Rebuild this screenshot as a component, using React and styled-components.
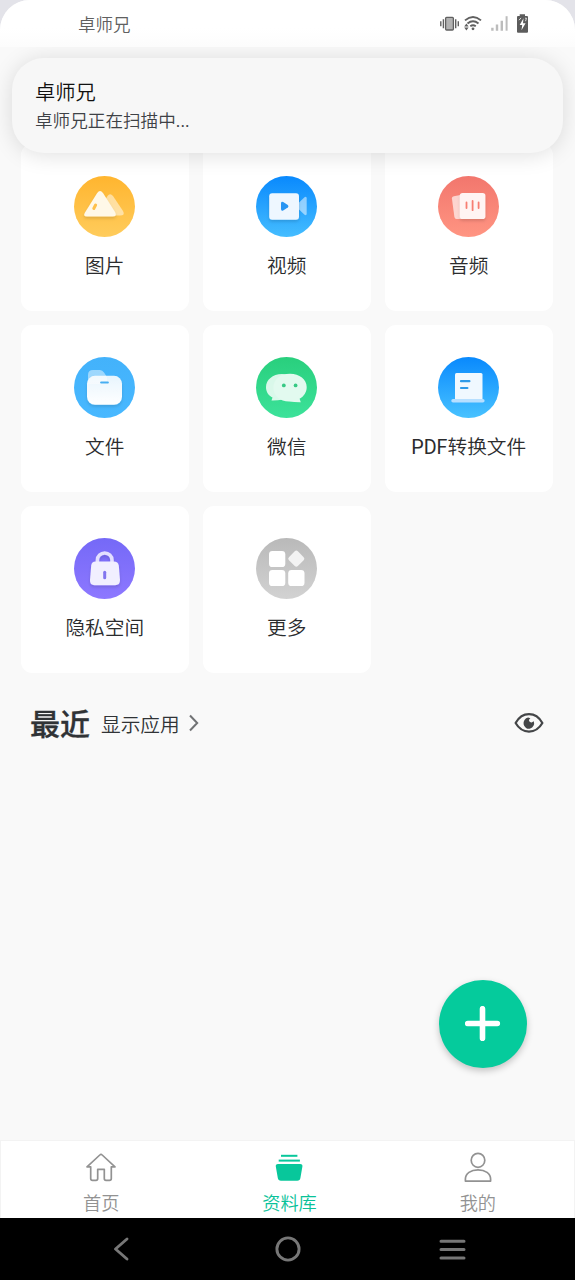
import React from 'react';
import styled, { createGlobalStyle } from 'styled-components';

const GlobalStyle = createGlobalStyle`
  * { box-sizing: border-box; }
  body {
    margin: 0;
    background: #e3e3e9;
    font-family: Roboto, "Noto Sans CJK SC", sans-serif;
    font-weight: 350;
  }
  svg { display: block; }
`;

const Screen = styled.div`
  position: relative;
  display: flex;
  flex-direction: column;
  width: 575px;
  height: 1280px;
  overflow: hidden;
  border-radius: 30px 30px 0 0;
  background: #f9f9f9;
`;

const StatusBar = styled.header`
  position: relative;
  z-index: 3;
  display: flex;
  flex: none;
  align-items: center;
  justify-content: space-between;
  height: 47px;
  padding: 0 46px 0 78px;
  background: linear-gradient(#fff 60%, #fcfcfc);
  color: #606060;
  font-size: 17.5px;
`;

const StatusIcons = styled.div`
  display: flex;
  align-items: center;
`;

const Notification = styled.section`
  position: absolute;
  z-index: 2;
  top: 58px;
  left: 12px;
  display: flex;
  flex-direction: column;
  width: 551px;
  height: 95px;
  padding: 21px 23px;
  border-radius: 32px;
  background: #f7f7f7;
  box-shadow: 0 2px 22px rgba(0, 0, 0, 0.13);
`;

const NoticeTitle = styled.div`
  color: #111;
  font-size: 20.3px;
  line-height: 28px;
`;

const NoticeText = styled.div`
  color: #3e4146;
  font-size: 17.6px;
  line-height: 28px;
`;

const Latin = styled.span`
  font-weight: 400;
`;

const Content = styled.main`
  flex: 1;
  padding: 97px 22.5px 0 21px;
`;

const Grid = styled.div`
  display: grid;
  grid-template-columns: repeat(3, 1fr);
  grid-auto-rows: 167px;
  gap: 14px 14.5px;
`;

const Card = styled.div`
  display: flex;
  flex-direction: column;
  align-items: center;
  padding-top: 32px;
  border-radius: 11px;
  background: #fff;
`;

const CardLabel = styled.div`
  margin-top: 15px;
  color: #2b2c2e;
  font-size: 19.7px;
  line-height: 29px;
  white-space: nowrap;
`;

const Recent = styled.div`
  display: flex;
  align-items: center;
  height: 60px;
  margin-top: 20px;
  padding: 0 9px;
  color: #303336;
`;

const RecentTitle = styled.h2`
  margin: 0 11px 0 0;
  padding-top: 3px;
  font-size: 30px;
  font-weight: 500;
  line-height: 60px;
  -webkit-text-stroke: 0.3px currentColor;
`;

const RecentFilter = styled.div`
  display: flex;
  flex: 1;
  align-items: center;
  gap: 9px;
  font-size: 19.7px;
`;

const AddButton = styled.button`
  position: absolute;
  top: 979.5px;
  left: 438.5px;
  display: flex;
  align-items: center;
  justify-content: center;
  width: 88px;
  height: 88px;
  padding: 0;
  border: 0;
  border-radius: 50%;
  background: #05cb9c;
  box-shadow: 0 3px 7px rgba(0, 0, 0, 0.22);
`;

const TabBar = styled.nav`
  display: grid;
  flex: none;
  grid-template-columns: repeat(3, 1fr);
  height: 78px;
  padding: 10px 2px 0 6px;
  border: 1px solid #f3f3f3;
  border-bottom: 0;
  background: #fff;
`;

const Tab = styled.div`
  display: flex;
  flex-direction: column;
  align-items: center;
  color: ${(p) => (p.$active ? '#09c299' : '#929292')};
  font-size: 18.2px;
  line-height: 26px;
  gap: 8px;
`;

const SystemBar = styled.footer`
  display: flex;
  flex: none;
  align-items: center;
  justify-content: space-between;
  height: 62px;
  padding: 0 109px 0 113px;
  background: #000;
`;

const discs = {
  image: ['#ffb52f', '#ffcc5c'],
  video: ['#0989fd', '#45bdff'],
  audio: ['#f2766d', '#ff9582'],
  file: ['#43b2fb', '#48b8ff'],
  wechat: ['#29cf7d', '#3ce29a'],
  pdf: ['#0989fd', '#48c2ff'],
  lock: ['#7569f7', '#8d78ff'],
  more: ['#b9b9b9', '#d2d2d2'],
};

function Disc({ name, children }) {
  const [from, to] = discs[name];
  return (
    <svg width="61" height="61" viewBox="0 0 61 61">
      <defs>
        <linearGradient id={`disc-${name}`} x1="0" y1="0" x2="0" y2="1">
          <stop stopColor={from} />
          <stop offset="1" stopColor={to} />
        </linearGradient>
        <linearGradient id={`face-${name}`} x1="0" y1="0" x2="0" y2="1">
          <stop stopColor="#fff" stopOpacity=".87" />
          <stop offset="1" stopColor="#fff" />
        </linearGradient>
        <filter id={`lift-${name}`} x="-30%" y="-30%" width="160%" height="170%">
          <feDropShadow dx="0" dy="2" stdDeviation="1.5" floodColor="#000" floodOpacity=".13" />
        </filter>
      </defs>
      <circle cx="30.5" cy="30.5" r="30.5" fill={`url(#disc-${name})`} />
      {children}
    </svg>
  );
}

const ImageIcon = () => (
  <Disc name="image">
    <path d="M30 26 L33.5 20 Q36 16.5 39 20 L49 35 Q51.5 39.5 46 39.5 H34Z" fill="#fff" opacity=".5" />
    <path d="M11 36.5 L23.2 17 Q26 13.2 29 17 L41 36 Q43.5 40.5 38.5 40.5 H13 Q8.5 40.3 11 36.5Z" fill="#fff8e8" filter="url(#lift-image)" />
    <path d="M21.6 29 L19.8 32.5" stroke="#ffc04b" strokeWidth="3" strokeLinecap="round" />
  </Disc>
);

const VideoIcon = () => (
  <Disc name="video">
    <path d="M42 27.5 L48.5 21.2 Q50.7 20 50.7 22.5 V37.5 Q50.7 40 48.5 38.7 L42 32.5Z" fill="#fff" opacity=".5" />
    <rect x="13.2" y="17.2" width="29.8" height="26.6" rx="3" fill="#eef7ff" filter="url(#lift-video)" />
    <path d="M25 27.3 Q25 25 27.2 26.1 L31.8 29 Q33.2 30.3 31.8 31.6 L27.2 34.4 Q25 35.3 25 33Z" fill="#2795f3" />
  </Disc>
);

const AudioIcon = () => (
  <Disc name="audio">
    <path d="M15.8 20.2 L25 18.5 V43 H18.5 Q16.7 43 16.4 41 L13.9 22.6 Q13.7 20.6 15.8 20.2Z" fill="#fff" opacity=".65" />
    <rect x="21.8" y="17" width="25.6" height="26" rx="2.8" fill="#fff4f3" filter="url(#lift-audio)" />
    <path d="M28.5 26.5 V32 M34.6 25 V34.2 M40.6 26.5 V32" stroke="#f77e72" strokeWidth="1.8" strokeLinecap="round" />
  </Disc>
);

const FileIcon = () => (
  <Disc name="file">
    <path d="M14 27 V18 Q14 13 19 13 H26 Q28.5 13 30 15.5 L33 20 V27Z" fill="#fff" opacity=".48" />
    <rect x="13" y="18.8" width="35" height="29" rx="8" fill="url(#face-file)" filter="url(#lift-file)" />
    <path d="M27.2 25.5 H33.8" stroke="#46aef2" strokeWidth="2.2" strokeLinecap="round" />
  </Disc>
);

const WechatIcon = () => (
  <Disc name="wechat">
    <path d="M26 17 C16.5 17 10 23 10 30.2 C10 35 12.6 38.5 16.5 40.6 L15.5 43.5 Q21 43.7 27 42.5 L37 39 V18Z" fill="#fff" opacity=".82" />
    <path d="M34 16.8 C24 16.8 17.4 23 17.4 30.5 C17.4 39 24 44.2 33 44.5 Q39 45.4 44.8 45.3 L43.6 41.8 C48 39.3 50.7 35.2 50.7 30 C50.7 22.5 43.5 16.8 34 16.8Z" fill="#e2faef" />
    <circle cx="27.8" cy="28.4" r="1.9" fill="#36c984" />
    <circle cx="39.6" cy="28.4" r="1.9" fill="#36c984" />
  </Disc>
);

const PdfIcon = () => (
  <Disc name="pdf">
    <rect x="17" y="16" width="27.5" height="28.5" rx="1.5" fill="#f0f8ff" />
    <rect x="13.3" y="42" width="33.3" height="3.4" rx="1.7" fill="#b7dfff" />
    <path d="M23 24.2 H31.4 M23 31 H29.4" stroke="#2e9ae8" strokeWidth="2.2" strokeLinecap="round" />
  </Disc>
);

const LockIcon = () => (
  <Disc name="lock">
    <g filter="url(#lift-lock)">
      <path d="M23.4 25 V22 A7.3 7 0 0 1 38 22 V25" fill="none" stroke="#e3dfff" strokeWidth="3.6" />
      <path d="M21.5 23.4 H39.7 Q44.2 23.4 44.8 27.5 L46 42 Q46.2 47.2 41 47.2 H20.5 Q15.7 47.2 16 42 L17.2 27.5 Q17.7 23.4 21.5 23.4Z" fill="#f1efff" />
    </g>
    <path d="M30.7 34.2 V39.7" stroke="#8275ef" strokeWidth="3" strokeLinecap="round" />
  </Disc>
);

const MoreIcon = () => (
  <Disc name="more">
    <rect x="13" y="13" width="16.3" height="16.1" rx="3.4" fill="#fff" />
    <rect x="13" y="32" width="16.3" height="16.1" rx="3.4" fill="#fff" />
    <rect x="32.2" y="32" width="16.3" height="16.1" rx="3.4" fill="#fff" />
    <rect x="34" y="14.4" width="12.6" height="12.6" rx="2.2" transform="rotate(45 40.3 20.7)" fill="#f3f3f3" />
  </Disc>
);

const cards = [
  { label: '图片', Icon: ImageIcon },
  { label: '视频', Icon: VideoIcon },
  { label: '音频', Icon: AudioIcon },
  { label: '文件', Icon: FileIcon },
  { label: '微信', Icon: WechatIcon },
  { latin: 'PDF', label: '转换文件', Icon: PdfIcon },
  { label: '隐私空间', Icon: LockIcon },
  { label: '更多', Icon: MoreIcon },
];

const DeviceStatus = () => (
  <svg width="91" height="22" viewBox="438 12.8 91 22" fill="none" stroke="#606060">
    <rect x="445.6" y="17.2" width="7.8" height="12.6" rx="1" fill="#b2b2b2" strokeWidth="1.3" />
    <path d="M443.4 19 V28 M440.8 21 V26 M455.7 19 V28 M458.3 21 V26" strokeWidth="1.4" />
    <path d="M465 20.2 Q473 13.3 481 20.2 M467.5 23.2 Q473 18.7 478.5 23.2 M470.3 26 Q473 24 475.8 26" strokeWidth="1.9" />
    <circle cx="473" cy="28.6" r="1.4" fill="#606060" stroke="none" />
    <path d="M464.2 26.4 L466.4 23.4 L468.6 26.4Z M464.2 27.4 L466.4 30.4 L468.6 27.4Z" fill="#606060" stroke="none" />
    <path d="M492.4 27.5 V30.5 M497 24.3 V30.5 M501.8 20.5 V30.5" stroke="#bcbcbc" strokeWidth="2.4" />
    <path d="M506.6 16 V30.5" stroke="#bcbcbc" strokeWidth="2" />
    <path d="M519.7 14 H525 V15.8 H527 Q528 15.8 528 16.8 V31.5 Q528 32.6 527 32.6 H518 Q517 32.6 517 31.5 V16.8 Q517 15.8 518 15.8 H519.7Z" fill="#5c5c5c" stroke="none" />
    <path d="M523.5 18 L519.7 24.7 H522.2 L521.5 30 L525.6 23 H523Z" fill="#fff" stroke="none" />
    <path d="M519 20 L521 17.7 M525 18 H526.5 L525.5 21" stroke="#ddd" strokeWidth="1" />
  </svg>
);

const ChevronIcon = () => (
  <svg width="11" height="18" viewBox="0 0 11 18" fill="none" stroke="#717375" strokeWidth="2">
    <path d="M1 1.5 L8.2 9 L1 16.5" />
  </svg>
);

const EyeIcon = () => (
  <svg width="30" height="22" viewBox="0 0 30 22">
    <path d="M1.6 11 C8.2 -.8 21.8 -.8 28.4 11 C21.8 22.4 8.2 22.4 1.6 11Z" fill="none" stroke="#444648" strokeWidth="2.2" strokeLinejoin="round" />
    <path d="M14.1 5.6 A5.3 5.6 0 1 0 19.8 9.3 L17.6 10.4 Q15.2 10.6 14.9 8.3 Q15.1 7 16.4 6.2Z" fill="#444648" />
  </svg>
);

const PlusIcon = () => (
  <svg width="36" height="36" viewBox="0.5 0.5 36 36" stroke="#fff" strokeWidth="5.6" strokeLinecap="round">
    <path d="M18 3.2 V32.8 M3.2 18 H32.8" />
  </svg>
);

const HomeIcon = () => (
  <svg width="32" height="32" viewBox="0 0 32 32" fill="none" stroke="currentColor" strokeWidth="1.7" strokeLinejoin="round">
    <path d="M16 3.4 Q16.6 3.4 17.2 4 L30 15.8 H26.3 V27.5 Q26.3 29.3 24.5 29.3 H21 Q19.3 29.3 19.3 27.5 V18.3 H12.7 V27.5 Q12.7 29.3 11 29.3 H7.5 Q5.7 29.3 5.7 27.5 V15.8 H2 L14.8 4 Q15.4 3.4 16 3.4Z" />
  </svg>
);

const LibraryIcon = () => (
  <svg width="32" height="32" viewBox="0 0 32 32" fill="#08c79b">
    <rect x="8" y="3.8" width="16.4" height="2" />
    <rect x="5.7" y="8.6" width="21.2" height="2" />
    <path d="M5 13 H27.2 Q29.8 13 29.4 15.5 L27.4 27 Q27 29.7 24.2 29.7 H8 Q5.3 29.7 4.8 27 L2.8 15.5 Q2.4 13 5 13Z" />
  </svg>
);

const PersonIcon = () => (
  <svg width="32" height="32" viewBox="0 0 32 32" fill="none" stroke="currentColor" strokeWidth="1.7">
    <ellipse cx="16" cy="9.3" rx="6.8" ry="7" />
    <path d="M3.4 30.1 V28 C3.4 22.5 8.7 18.8 16 18.8 C23.3 18.8 28.6 22.5 28.6 28 V30.1Z" strokeLinejoin="round" />
  </svg>
);

const BackIcon = () => (
  <svg width="23" height="26" viewBox="0 0 23 26" fill="none" stroke="#777" strokeWidth="2.9" strokeLinecap="round" strokeLinejoin="round">
    <path d="M14 3 L2.5 13 L14 23" />
  </svg>
);

const CircleIcon = () => (
  <svg width="26" height="26" viewBox="0 0 26 26" fill="none" stroke="#777" strokeWidth="2.9">
    <circle cx="13" cy="13" r="11.1" />
  </svg>
);

const MenuIcon = () => (
  <svg width="27" height="24" viewBox="0 0 27 24" stroke="#777" strokeWidth="3" strokeLinecap="round">
    <path d="M2 4.3 H25 M2 12.6 H25 M2 20.9 H25" />
  </svg>
);

export default function App() {
  return (
    <Screen>
      <GlobalStyle />
      <StatusBar>
        <span>卓师兄</span>
        <StatusIcons>
          <DeviceStatus />
        </StatusIcons>
      </StatusBar>
      <Notification>
        <NoticeTitle>卓师兄</NoticeTitle>
        <NoticeText>
          卓师兄正在扫描中<Latin>...</Latin>
        </NoticeText>
      </Notification>
      <Content>
        <Grid>
          {cards.map(({ latin, label, Icon }) => (
            <Card key={label}>
              <Icon />
              <CardLabel>
                {latin && <Latin>{latin}</Latin>}
                {label}
              </CardLabel>
            </Card>
          ))}
        </Grid>
        <Recent>
          <RecentTitle>最近</RecentTitle>
          <RecentFilter>
            显示应用
            <ChevronIcon />
          </RecentFilter>
          <EyeIcon />
        </Recent>
      </Content>
      <AddButton aria-label="添加">
        <PlusIcon />
      </AddButton>
      <TabBar>
        <Tab>
          <HomeIcon />
          首页
        </Tab>
        <Tab $active>
          <LibraryIcon />
          资料库
        </Tab>
        <Tab>
          <PersonIcon />
          我的
        </Tab>
      </TabBar>
      <SystemBar>
        <BackIcon />
        <CircleIcon />
        <MenuIcon />
      </SystemBar>
    </Screen>
  );
}
